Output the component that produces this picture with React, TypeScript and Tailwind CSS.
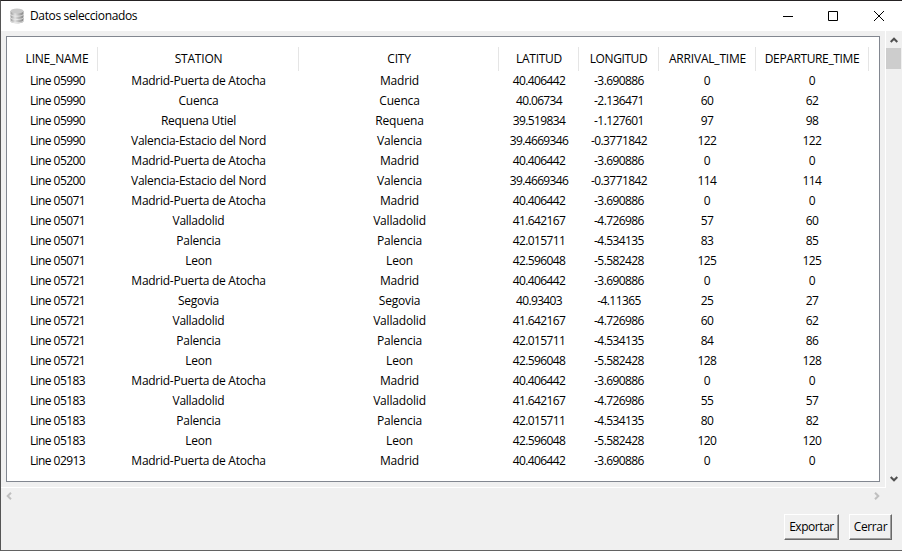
const columns = [
  { name: 'LINE_NAME', cell: 'tracking-[-0.56px]', head: 'tracking-[-0.2px]' },
  { name: 'STATION', cell: 'tracking-[-0.26px]', head: 'tracking-[-0.2px] pl-px' },
  { name: 'CITY', cell: 'tracking-[-0.18px] pl-px', head: 'tracking-[-0.2px] pl-px' },
  { name: 'LATITUD', cell: 'tracking-[-0.64px]', head: 'tracking-[-0.3px] pl-px' },
  { name: 'LONGITUD', cell: 'tracking-[-0.58px]', head: 'tracking-[-0.4px]' },
  { name: 'ARRIVAL_TIME', cell: 'tracking-[-0.6px] pr-px', head: 'tracking-[-0.2px] pl-px' },
  { name: 'DEPARTURE_TIME', cell: 'tracking-[-0.6px] pr-px', head: 'tracking-[-0.38px]' },
];

const stations: Record<string, string[]> = {
  madrid: ['Madrid-Puerta de Atocha', 'Madrid', '40.406442', '-3.690886'],
  cuenca: ['Cuenca', 'Cuenca', '40.06734', '-2.136471'],
  requena: ['Requena Utiel', 'Requena', '39.519834', '-1.127601'],
  valencia: ['Valencia-Estacio del Nord', 'Valencia', '39.4669346', '-0.3771842'],
  valladolid: ['Valladolid', 'Valladolid', '41.642167', '-4.726986'],
  palencia: ['Palencia', 'Palencia', '42.015711', '-4.534135'],
  leon: ['Leon', 'Leon', '42.596048', '-5.582428'],
  segovia: ['Segovia', 'Segovia', '40.93403', '-4.11365'],
};

const stops: [string, string, string, string][] = [
  ['05990', 'madrid', '0', '0'],
  ['05990', 'cuenca', '60', '62'],
  ['05990', 'requena', '97', '98'],
  ['05990', 'valencia', '122', '122'],
  ['05200', 'madrid', '0', '0'],
  ['05200', 'valencia', '114', '114'],
  ['05071', 'madrid', '0', '0'],
  ['05071', 'valladolid', '57', '60'],
  ['05071', 'palencia', '83', '85'],
  ['05071', 'leon', '125', '125'],
  ['05721', 'madrid', '0', '0'],
  ['05721', 'segovia', '25', '27'],
  ['05721', 'valladolid', '60', '62'],
  ['05721', 'palencia', '84', '86'],
  ['05721', 'leon', '128', '128'],
  ['05183', 'madrid', '0', '0'],
  ['05183', 'valladolid', '55', '57'],
  ['05183', 'palencia', '80', '82'],
  ['05183', 'leon', '120', '120'],
  ['02913', 'madrid', '0', '0'],
];

const grid = 'grid grid-cols-[81px_201px_200px_80px_80px_97px_113px]';

function DatabaseIcon() {
  return (
    <svg width="14" height="16" viewBox="0 0 14 16">
      <defs>
        <linearGradient id="drum" x1="0" x2="1">
          <stop offset="0" stopColor="#9a9a9a" />
          <stop offset="0.35" stopColor="#e2e2e2" />
          <stop offset="0.65" stopColor="#b5b5b5" />
          <stop offset="1" stopColor="#858585" />
        </linearGradient>
      </defs>
      <path d="M.5 3v10c0 1.4 3 2.5 6.5 2.5s6.500-1.100 6.500-2.500V3z" fill="url(#drum)" />
      <ellipse cx="7" cy="3" rx="6.500" ry="2.500" fill="#c9c9c9" />
      <path d="M.5 6c0 1.300 3 2.200 6.500 2.200s6.500-.9 6.500-2.200M.5 9.300c0 1.300 3 2.200 6.500 2.200s6.500-.9 6.500-2.200M.5 12.500c0 1.300 3 2.200 6.500 2.200s6.500-.9 6.500-2.200" fill="none" stroke="#eee" strokeWidth=".8" />
    </svg>
  );
}

function Chevron({ d, color, className }: { d: string; color: string; className: string }) {
  return (
    <svg className={className} width="8" height="8" viewBox="0 0 8 8">
      <path d={d} fill="none" stroke={color} strokeWidth="2" />
    </svg>
  );
}

function Button({ label, className }: { label: string; className: string }) {
  return (
    <button className={`h-[26px] border border-t-white border-l-white border-r-[#696969] border-b-[#696969] shadow-[inset_-1px_-1px_0_#a0a0a0] leading-[24px] ${className}`}>
      {label}
    </button>
  );
}

export default function App() {
  return (
    <div className="flex h-[551px] w-[902px] flex-col overflow-hidden border-y border-l border-t-[#252223] border-b-[#626262] border-l-[#555] bg-[#f0f0f0] font-['Open_Sans','Noto_Sans',sans-serif] text-[12px] leading-[20px] text-black">
      <header className="flex h-[30px] shrink-0 items-center bg-white">
        <span className="ml-[9px]"><DatabaseIcon /></span>
        <span className="ml-[6px] tracking-[-0.36px]">Datos seleccionados</span>
        <svg className="ml-auto mr-[18px]" width="102" height="12" viewBox="0 0 102 12" fill="none" stroke="#000">
          <path d="M1 6.500h10M46.500 1.500h9v9h-9zM92 1l10 10M102 1L92 11" />
        </svg>
      </header>
      <div className="flex h-[457px] shrink-0">
        <div className="w-[885px] shrink-0 border-b border-r border-white pl-[5px] pt-[5px]">
          <main className="h-[446px] w-[874px] border border-[#828790] bg-white pl-[10px] pt-[10px]">
            <div className={`${grid} h-[24px] leading-[23px]`}>
              {columns.map((c) => (
                <div key={c.name} className={`border-r border-[#e5e5e5] text-center whitespace-nowrap ${c.head}`}>{c.name}</div>
              ))}
            </div>
            {stops.map(([line, station, arrival, departure], i) => (
              <div key={i} className={`${grid} h-[20px]`}>
                {[`Line ${line}`, ...stations[station], arrival, departure].map((text, j) => (
                  <div key={j} className={`text-center whitespace-nowrap ${columns[j].cell}`}>{text}</div>
                ))}
              </div>
            ))}
          </main>
        </div>
        <div className="flex w-[15px] flex-col items-center">
          <Chevron className="mt-[5px]" d="M.7 6L4 2.700 7.300 6" color="#505050" />
          <div className="mt-[4px] h-[21px] w-[15px] bg-[#cdcdcd]" />
          <Chevron className="mb-[5px] mt-auto" d="M.7 2L4 5.300 7.300 2" color="#505050" />
        </div>
      </div>
      <div className="flex h-[15px] shrink-0 items-center justify-between pl-[4px] pr-[21px]">
        <Chevron className="" d="M6 .7L2.700 4 6 7.300" color="#bfbfbf" />
        <Chevron className="" d="M2 .7L5.300 4 2 7.300" color="#bfbfbf" />
      </div>
      <footer className="mt-[11px] flex justify-end gap-[10px] pr-[10px]">
        <Button label="Exportar" className="w-[55px] tracking-[-0.45px]" />
        <Button label="Cerrar" className="w-[43px] tracking-[-0.4px]" />
      </footer>
    </div>
  );
}
